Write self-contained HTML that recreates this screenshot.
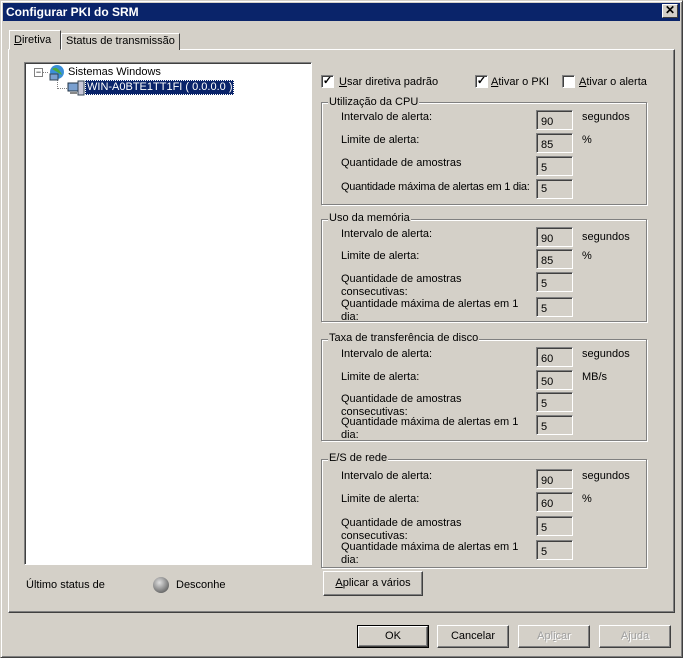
<!DOCTYPE html>
<html><head><meta charset="utf-8"><style>
*{margin:0;padding:0;box-sizing:border-box}
body{width:683px;height:658px;background:#d4d0c8;font-family:"Liberation Sans",sans-serif;font-size:11px;color:#000;position:relative;overflow:hidden}
.a{position:absolute;white-space:nowrap;line-height:13px}
.win{position:absolute;left:0;top:0;width:683px;height:658px;border:1px solid;border-color:#d4d0c8 #404040 #404040 #d4d0c8;box-shadow:inset 1px 1px 0 #fff,inset -1px -1px 0 #808080}
.title{position:absolute;left:3px;top:3px;width:677px;height:18px;background:#0a246a;color:#fff;font-weight:bold;font-size:12px;line-height:18px;padding-left:3px}
.close{position:absolute;left:662px;top:4px;width:16px;height:14px;background:#d4d0c8;border:1px solid;border-color:#fff #404040 #404040 #fff;font-size:12px;line-height:11px;text-align:center;font-weight:bold}
.panel{position:absolute;left:8px;top:49px;width:667px;height:564px;border:1px solid;border-color:#fff #404040 #404040 #fff;box-shadow:inset -1px -1px 0 #808080}
.tab{position:absolute;border:1px solid;border-bottom:none;border-color:#fff #404040 #404040 #fff;background:#d4d0c8;padding:0 4px;line-height:15px}
.sunk{position:absolute;border:1px solid;border-color:#808080 #fff #fff #808080;box-shadow:inset 1px 1px 0 #404040}
.cb{position:absolute;width:13px;height:13px;background:#fff;border:1px solid;border-color:#808080 #fff #fff #808080;box-shadow:inset 1px 1px 0 #404040;font-size:11px;line-height:11px;text-align:center;font-weight:bold}
.grp{position:absolute;border:1px solid #808080;box-shadow:1px 1px 0 #fff,inset 1px 1px 0 #fff}
.gt{position:absolute;background:#d4d0c8;padding:0 1px;line-height:13px}
.in{position:absolute;left:536px;width:37px;height:20px;border:1px solid;border-color:#808080 #fff #fff #808080;box-shadow:inset 1px 1px 0 #404040;padding:5px 0 0 4px;line-height:13px}
.btn{position:absolute;height:23px;border:1px solid;border-color:#fff #404040 #404040 #fff;box-shadow:inset -1px -1px 0 #808080;text-align:center;line-height:20px}
.dis{color:#a0a0a0;text-shadow:1px 1px 0 #fff}
u{text-decoration:underline}
</style></head><body>
<div class="win"></div>
<div class="title">Configurar PKI do SRM</div>
<div class="close">✕</div>
<div class="panel"></div>
<div class="tab" style="left:61px;top:33px;height:17px">Status de transmissão</div>
<div class="tab" style="left:9px;top:30px;height:20px;line-height:18px;width:52px;z-index:2;border-bottom:1px solid #d4d0c8"><u>D</u>iretiva</div>

<div class="sunk" style="left:24px;top:62px;width:288px;height:503px;background:#fff"></div>
<div style="position:absolute;left:34px;top:68px;width:9px;height:9px;border:1px solid #808080;background:#fff;font-size:9px;line-height:6px;text-align:center">−</div>
<div style="position:absolute;left:43px;top:72px;width:5px;border-top:1px dotted #808080"></div>
<div style="position:absolute;left:57px;top:79px;height:10px;border-left:1px dotted #808080"></div>
<div style="position:absolute;left:57px;top:88px;width:10px;border-top:1px dotted #808080"></div>
<svg style="position:absolute;left:48px;top:64px" width="18" height="18"><circle cx="9" cy="8" r="7" fill="#3a8fd8"/><path d="M4 5q4-3 7 1t3 5" fill="#4caa3c"/><rect x="2" y="10" width="8" height="6" fill="#7aa0d0" stroke="#345"/></svg>
<span class="a" style="left:68px;top:66px">Sistemas Windows</span>
<svg style="position:absolute;left:67px;top:80px" width="18" height="16"><rect x="1" y="3" width="10" height="8" fill="#7aa0d0" stroke="#234"/><rect x="11" y="1" width="6" height="14" fill="#c8c8d8" stroke="#345"/><rect x="3" y="12" width="7" height="2" fill="#888"/></svg>
<span class="a" style="left:85px;top:80px;background:#0a246a;color:#fff;padding:1px 2px;outline:1px dotted #fff;outline-offset:-1px">WIN-A0BTE1TT1FI ( 0.0.0.0 )</span>

<div class="cb" style="left:321px;top:75px">✓</div><span class="a" style="left:339px;top:76px"><u>U</u>sar diretiva padrão</span>
<div class="cb" style="left:475px;top:75px">✓</div><span class="a" style="left:491px;top:76px"><u>A</u>tivar o PKI</span>
<div class="cb" style="left:562px;top:75px"></div><span class="a" style="left:579px;top:76px"><u>A</u>tivar o alerta</span>

<div class="grp" style="left:321px;top:102px;width:326px;height:103px"></div><span class="gt" style="left:328px;top:96px">Utilização da CPU</span>
<span class="a" style="left:341px;top:111px">Intervalo de alerta:</span><div class="in" style="top:110px">90</div><span class="a" style="left:582px;top:111px">segundos</span>
<span class="a" style="left:341px;top:134px">Limite de alerta:</span><div class="in" style="top:133px">85</div><span class="a" style="left:582px;top:134px">%</span>
<span class="a" style="left:341px;top:157px">Quantidade de amostras</span><div class="in" style="top:156px">5</div>
<span class="a" style="left:341px;top:181px;letter-spacing:-0.25px">Quantidade máxima de alertas em 1 dia:</span><div class="in" style="top:179px;padding-top:3px">5</div>

<div class="grp" style="left:321px;top:219px;width:326px;height:103px"></div><span class="gt" style="left:328px;top:212px">Uso da memória</span>
<span class="a" style="left:341px;top:228px">Intervalo de alerta:</span><div class="in" style="top:227px">90</div><span class="a" style="left:582px;top:231px">segundos</span>
<span class="a" style="left:341px;top:250px">Limite de alerta:</span><div class="in" style="top:249px">85</div><span class="a" style="left:582px;top:250px">%</span>
<span class="a" style="left:341px;top:273px">Quantidade de amostras<br>consecutivas:</span><div class="in" style="top:272px">5</div>
<span class="a" style="left:341px;top:298px">Quantidade máxima de alertas em 1<br>dia:</span><div class="in" style="top:297px">5</div>

<div class="grp" style="left:321px;top:339px;width:326px;height:102px"></div><span class="gt" style="left:328px;top:332px">Taxa de transferência de disco</span>
<span class="a" style="left:341px;top:348px">Intervalo de alerta:</span><div class="in" style="top:347px">60</div><span class="a" style="left:582px;top:348px">segundos</span>
<span class="a" style="left:341px;top:371px">Limite de alerta:</span><div class="in" style="top:370px">50</div><span class="a" style="left:582px;top:371px">MB/s</span>
<span class="a" style="left:341px;top:393px">Quantidade de amostras<br>consecutivas:</span><div class="in" style="top:392px">5</div>
<span class="a" style="left:341px;top:416px">Quantidade máxima de alertas em 1<br>dia:</span><div class="in" style="top:415px">5</div>

<div class="grp" style="left:321px;top:459px;width:326px;height:109px"></div><span class="gt" style="left:328px;top:452px">E/S de rede</span>
<span class="a" style="left:341px;top:470px">Intervalo de alerta:</span><div class="in" style="top:469px">90</div><span class="a" style="left:582px;top:470px">segundos</span>
<span class="a" style="left:341px;top:493px">Limite de alerta:</span><div class="in" style="top:492px">60</div><span class="a" style="left:582px;top:493px">%</span>
<span class="a" style="left:341px;top:517px">Quantidade de amostras<br>consecutivas:</span><div class="in" style="top:516px">5</div>
<span class="a" style="left:341px;top:541px">Quantidade máxima de alertas em 1<br>dia:</span><div class="in" style="top:540px">5</div>

<span class="a" style="left:26px;top:579px">Último status de</span>
<div style="position:absolute;left:153px;top:577px;width:16px;height:16px;border-radius:50%;background:radial-gradient(circle at 40% 35%,#e0e0e0,#808080 60%,#404040);"></div>
<span class="a" style="left:176px;top:579px">Desconhe</span>
<div class="btn" style="left:323px;top:571px;width:100px;height:25px;line-height:22px"><u>A</u>plicar a vários</div>

<div style="position:absolute;left:357px;top:625px;width:72px;height:23px;border:1px solid #000"></div>
<div class="btn" style="left:358px;top:626px;width:70px;height:21px;line-height:18px">OK</div>
<div class="btn" style="left:437px;top:625px;width:72px">Cancelar</div>
<div class="btn dis" style="left:518px;top:625px;width:72px">Apl<u>i</u>car</div>
<div class="btn dis" style="left:599px;top:625px;width:72px">Ajuda</div>
</body></html>
